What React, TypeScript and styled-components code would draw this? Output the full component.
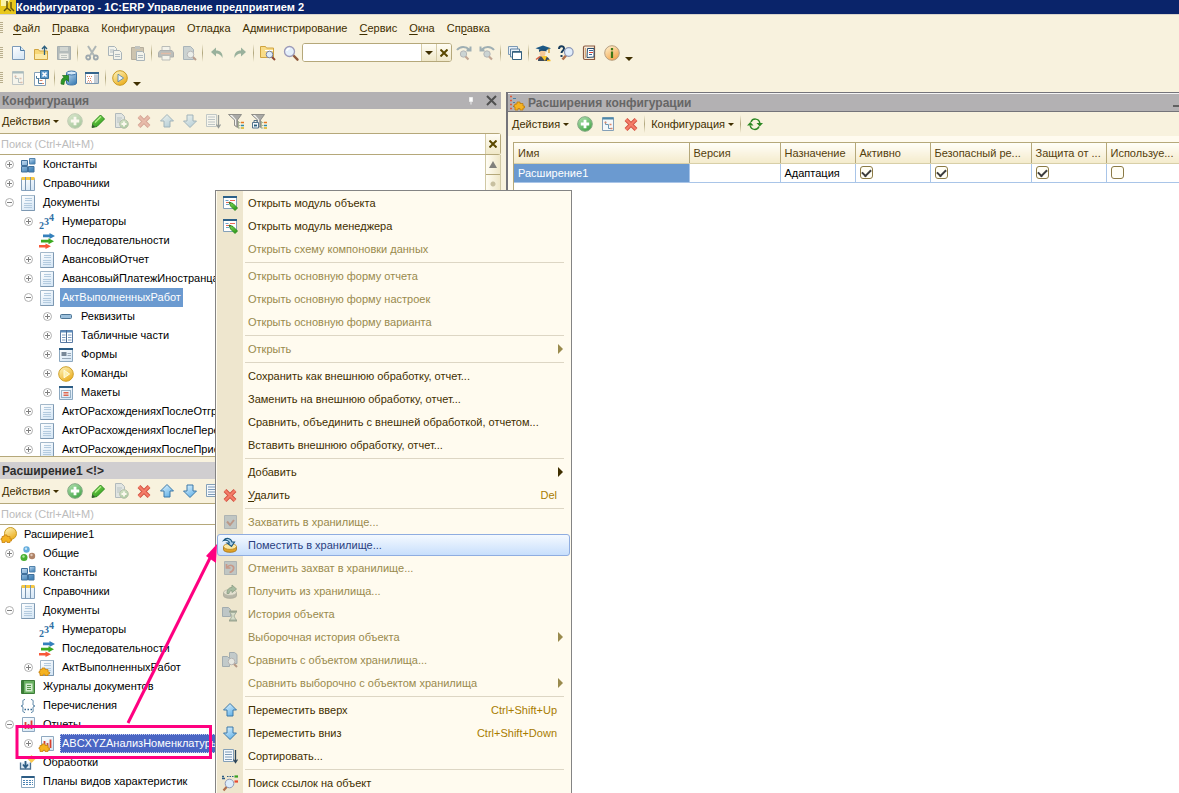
import React from "react";
import styled, { createGlobalStyle, css } from "styled-components";

const c = {
  cream: "#f8f2de",
  paper: "#fffbef",
  ink: "#3f2f00",
  mutedInk: "#998a4d",
  line: "#b5a87a",
  softLine: "#ddd6c4",
  select: "#6b9ad0",
  pink: "#ff0080",
};

const GlobalStyle = createGlobalStyle`
  * { box-sizing: border-box; }
  body { margin: 0; background: ${c.cream}; }
  body, button, input, table { font-family: "Liberation Sans", Arial, sans-serif; font-size: 11px; }
  button { border: 0; padding: 0; background: none; color: inherit; }
  u { text-underline-offset: 2px; }
`;

/* ---------- icons ---------- */

const doc = (
  <>
    <path d="M1.5.5h13v15h-13z" fill="url(#paper)" stroke="#a3b8ca" />
    <path d="M14.5.5v15h-13" stroke="#7d98b2" />
    <path d="M5 3.5h7M5 5.5h7M4 8.5h8M4 10.5h8M4 12.5h8" stroke="#b4cbdf" />
  </>
);
const arrowUp = <path d="M8 1.5l6.5 6.5H11v6H5V8H1.5z" fill="url(#sky)" stroke="#3c78a8" strokeLinejoin="round" />;
const arrowDown = <path d="M8 14.5L14.5 8H11V2H5v6H1.5z" fill="url(#sky)" stroke="#3c78a8" strokeLinejoin="round" />;
const pencil = (
  <>
    <path d="M2 14.5l1-5 7.5-7.5 4 4L7 13.5z" fill="url(#green)" stroke="#2c8a1c" />
    <path d="M5 9.5l6-6" stroke="#b4f08c" strokeWidth="1.2" />
    <path d="M2 14.5l.6-3 2.4 2.4z" fill="#3c4c3c" />
  </>
);
const lens = (
  <>
    <path d="M10.5 10.5l4 4.2" stroke="#8f5a3c" strokeWidth="2.4" strokeLinecap="round" />
    <circle cx="6.5" cy="6.5" r="5" fill="#e4effa" stroke="#9c9ab8" strokeWidth="1.3" />
    <path d="M3.8 6a3 3 0 0 1 3-2.5" stroke="#fff" strokeWidth="1.5" fill="none" />
  </>
);
const smallLens = (
  <>
    <path d="M11.5 11.5l3.5 3.5" stroke="#8f4a34" strokeWidth="2" />
    <circle cx="9.5" cy="9.5" r="3.3" fill="#dcecfa" stroke="#7d82a0" />
  </>
);
const puzzle = (
  <path d="M1 9.5h2V8h3v1.5h3V12h1.5v2H9v1.5H6v-1.2H4v1.2H1v-2.5H0v-1.5h1z" fill="#f5b321" stroke="#c98410" strokeWidth=".8" />
);
const funnel = (
  <>
    <path d="M.5 1.5h13L9.5 7v7.5l-3-2V7z" fill="#a9a9a6" />
    <path d="M1.5 2l5.500 5v5l1 1V6.500L4 2z" fill="#f2f2f0" />
    <path d="M.5 1.5h13L9.5 7v7.5l-3-2V7z" stroke="#80807c" strokeWidth=".8" />
  </>
);
const funnelRows = (
  <>
    <path d="M10.5 8v7.5M10.5 9.5h2M10.5 12.5h2M10.5 15h2" stroke="#9aa888" strokeWidth=".8" />
    <path d="M13 9.5h3" stroke="#e87820" strokeWidth="1.5" />
    <path d="M13 12.5h3" stroke="#2c8ca8" strokeWidth="1.5" />
    <path d="M13 15h3" stroke="#d8b020" strokeWidth="1.5" />
  </>
);
const report = (
  <>
    <path d="M2.5.5h12v14h-12z" fill="url(#paper)" stroke="#8ea8c0" />
    <path d="M5.5 5v7M11.5 3.5V12" stroke="#d8402e" strokeWidth="1.8" />
    <path d="M8.5 7v5" stroke="#c05848" strokeWidth="1.8" />
  </>
);
const sequence = (
  <>
    <path d="M4 1.500h6.500V0L16 3l-5.500 3V4.300H4z" fill="#3480bc" />
    <path d="M2 6.800h7.500V5.300L15 8.300l-5.500 3V9.600H2z" fill="#3caa20" />
    <path d="M0 12h6.500v-1.500L12 13.300 6.500 16v-1.400H0z" fill="#f85838" />
  </>
);
const formFrame = (
  <>
    <path d="M1.5 1.5h13v13h-13z" fill="url(#paper)" stroke="#8ca8c0" />
    <path d="M1 2h14" stroke="#2c5c84" strokeWidth="2" />
  </>
);
const barrel = (
  <>
    <path d="M1.5 9.5v3.2c0 1.4 2.9 2.6 6.5 2.6s6.500-1.200 6.500-2.600V9.500z" fill="#e0a428" stroke="#a06c10" strokeWidth=".8" />
    <ellipse cx="8" cy="9.5" rx="6.5" ry="2.9" fill="#fbe8a4" stroke="#b88420" strokeWidth=".8" />
  </>
);
const playDisc = (
  <>
    <circle cx="8" cy="8" r="7.3" fill="url(#gold)" stroke="#c99a20" />
    <path d="M6 4.2L11.6 8 6 11.8z" fill="#eaf4fb" stroke="#5c88a8" strokeWidth=".9" />
  </>
);
const commandDisc = (
  <>
    <circle cx="8" cy="8" r="7.3" fill="url(#gold)" stroke="#cfa028" />
    <path d="M6 4.2L11.6 8 6 11.8z" fill="#fdf0a8" stroke="#fffbe0" />
  </>
);

const glyphs: Record<string, React.ReactNode> = {
  app: (
    <>
      <path d="M0 0h16v16H0z" fill="#e8c81c" />
      <path d="M1 1h9l-4 6H1z" fill="#fbf4a8" />
      <path d="M7 2v7l-3 3M7 9l4 3M11 3v6l3 3" stroke="#6a5808" strokeWidth="1.5" fill="none" />
    </>
  ),
  new: (
    <>
      <path d="M2.5 1.5h8l4 4v9h-12z" fill="url(#paper)" stroke="#7c9ab8" />
      <path d="M10.5 1.5v4h4" fill="#d8e8f4" stroke="#4c7ca4" />
    </>
  ),
  open: (
    <>
      <path d="M1.5 4.5h4l1 1.5h8v8.5h-13z" fill="#f8d878" stroke="#d0a440" />
      <path d="M2 9h12v5H2z" fill="#fceaa8" />
      <path d="M11.5 10V1.5M9 4l2.500-2.700L14 4" stroke="#2c6080" strokeWidth="1.3" fill="none" />
    </>
  ),
  save: (
    <>
      <path d="M1.5 1.5h13v13h-13z" fill="#6c88a4" stroke="#507090" />
      <path d="M4 2h8v4H4z" fill="#a8bccc" />
      <path d="M3.5 8.5h9V14h-9z" fill="#e4ecf0" />
      <path d="M5 10.5h6M5 12.5h6" stroke="#8098a8" />
    </>
  ),
  cut: (
    <>
      <path d="M4 1l6 9.5M12 1L6 10.5" stroke="#5e7c98" strokeWidth="2" />
      <circle cx="4.2" cy="12.5" r="2" fill="none" stroke="#38608c" strokeWidth="1.8" />
      <circle cx="11.8" cy="12.5" r="2" fill="none" stroke="#38608c" strokeWidth="1.8" />
    </>
  ),
  copy: (
    <>
      <path d="M1.5 1.5h6l2 2v7h-8z" fill="#eef4fa" stroke="#5478a4" />
      <path d="M3 5h4M3 7h3" stroke="#6488b4" />
      <path d="M6.5 5.5h6l2 2v7h-8z" fill="#eef4fa" stroke="#5478a4" />
      <path d="M8 9.5h5M8 11.5h5" stroke="#6488b4" />
    </>
  ),
  paste: (
    <>
      <path d="M1.5 2.5h12v12h-12z" fill="#a89878" stroke="#786c58" />
      <path d="M5 1h5v3H5z" fill="#8898a8" />
      <path d="M6.5 6.5h6l2 2v7h-8z" fill="#eef4fa" stroke="#5478a4" />
      <path d="M8 10.5h5M8 12.5h5" stroke="#6488b4" />
    </>
  ),
  print: (
    <>
      <path d="M4 1.5h8v5H4z" fill="#f0f4f8" stroke="#788898" />
      <path d="M2 5.5h12l1.5 2V12H.5V7.5z" fill="#7c8ca0" stroke="#607088" />
      <path d="M4 10.5h8V15H4z" fill="#f0f4f8" stroke="#788898" />
      <path d="M3 8.5h10" stroke="#e08060" strokeWidth="1.5" />
    </>
  ),
  preview: (
    <>
      <path d="M2.5 1.5h7l3 3v10h-10z" fill="#98b4d0" stroke="#5478a4" />
      {smallLens}
    </>
  ),
  undo: <path d="M2 7l5-4.500v3c4.500 0 7 2.500 6.500 7.500C12 10 10 8.500 7 8.500v3z" fill="#2c7858" />,
  redo: <path d="M14 7L9 2.500v3c-4.500 0-7 2.500-6.500 7.500C4 10 6 8.500 9 8.500v3z" fill="#2c7858" />,
  findFolder: (
    <>
      <path d="M.5 1.5h5l1 1.5h7v9.5H.5z" fill="#f8dc88" stroke="#d0a440" />
      <path d="M5 5.5h8" stroke="#fff" />
      {smallLens}
    </>
  ),
  zoom: lens,
  findNext: (
    <>
      <path d="M1 5c3-4 9-4 12-.5M14.5 1.5v4h-4" stroke="#3c7098" strokeWidth="2" fill="none" />
      <circle cx="7.5" cy="9" r="3.2" fill="#98b8d4" stroke="#6c7c98" />
      <path d="M9.5 11.5l3 3" stroke="#a05a40" strokeWidth="2.2" />
    </>
  ),
  findPrev: (
    <>
      <path d="M15 5c-3-4-9-4-12-.5M1.5 1.5v4h4" stroke="#3c7098" strokeWidth="2" fill="none" />
      <circle cx="8" cy="9" r="3.2" fill="#98b8d4" stroke="#6c7c98" />
      <path d="M10 11.5l3 3" stroke="#a05a40" strokeWidth="2.2" />
    </>
  ),
  windows: (
    <>
      <path d="M1.5 1.5h9v8h-9z" fill="#e8f0f8" stroke="#7c9ab4" />
      <path d="M3.5 4h9v8h-9z" fill="#e8f0f8" stroke="#5c80a0" />
      <path d="M5.5 6.5h9v8h-9z" fill="#fff" stroke="#34607f" />
      <path d="M5.5 7h9" stroke="#34607f" strokeWidth="1.5" />
    </>
  ),
  scholar: (
    <>
      <path d="M3 16c0-4 2-5 5-5s6 1 7 5z" fill="#3c4a5c" />
      <path d="M6 11l4 5 2-5z" fill="#f8c428" />
      <path d="M12 15.5h3.5" stroke="#f4b820" strokeWidth="1.5" />
      <ellipse cx="7.5" cy="8" rx="3" ry="3.5" fill="#f4c898" />
      <path d="M.5 3.200L8 .5l8 2.700L9 6z" fill="#1c5884" />
      <path d="M4 4.5V7c2-1.500 5-1.500 7.500-.5v-2z" fill="#1a4a70" />
      <path d="M14 3.5V8" stroke="#d09018" strokeWidth="1.2" />
      <path d="M1 14.5l4-3" stroke="#d86040" strokeWidth="1.5" />
    </>
  ),
  helpSearch: (
    <>
      <path d="M1 4c0-3.500 5-3.500 5-.5C6 6 3.500 5.500 3.500 8M3.500 10v2" stroke="#183c5c" strokeWidth="2" fill="none" />
      <path d="M8 10.5l-3.500 4" stroke="#b0704c" strokeWidth="2.6" />
      <circle cx="10.8" cy="7" r="4.3" fill="#e0ecfa" stroke="#8c98b8" strokeWidth="1.2" />
    </>
  ),
  book: (
    <>
      <path d="M2.5 2.5c0-1 .5-1.500 1.500-1.500h9.500v13.500H4c-1 0-1.500-.5-1.500-1.500z" fill="#f6ead8" stroke="#8a5a40" strokeWidth="1.2" />
      <path d="M6.5 3.5H13V12l-7 .5z" fill="#fff" stroke="#2c5070" />
      <path d="M8 5.5h4M8 9.5h3" stroke="#34689a" />
      <path d="M8 7.5h4" stroke="#d84838" />
      <path d="M4.5 3v10" stroke="#d8a878" />
    </>
  ),
  info: (
    <>
      <circle cx="8" cy="8" r="7.3" fill="url(#amber)" stroke="#b8a080" />
      <path d="M8 3v2.2M8 6.500V13" stroke="#3c7818" strokeWidth="2.2" />
    </>
  ),
  treeForm: (
    <>
      <path d="M2.5 1.5h11v13h-11z" fill="#f4f8fa" stroke="#84a0b8" />
      <path d="M2.5 2.5h11" stroke="#4c88a8" strokeWidth="2" />
      <path d="M5.5 5.5v3h3M8.500 8.500v4h3" stroke="#6c98b4" fill="none" />
      <path d="M4.5 6.5h2M9.5 8.5h2M10.5 12.5h2" stroke="#e08868" strokeWidth="1.5" />
    </>
  ),
  closeTree: (
    <>
      <path d="M1.5 2.5h11v13h-11z" fill="#fff" stroke="#84a0b8" />
      <path d="M3.5 6v2.5h3M5.500 8.500v5H9" stroke="#4c7c9c" fill="none" />
      <path d="M9 13.5h2M6.5 10.5h3" stroke="#e08868" />
      <path d="M7.5.5h8v8h-8z" fill="#5c98c8" stroke="#34709c" />
      <path d="M9.5 2.5l4 4M13.5 2.5l-4 4" stroke="#fff" strokeWidth="1.7" />
    </>
  ),
  database: (
    <>
      <path d="M5.5 3v10c0 1.300 2.200 2 5 2s5-.7 5-2V3z" fill="url(#blue)" stroke="#3c74a8" />
      <ellipse cx="10.5" cy="3" rx="5" ry="2" fill="#d4e8f8" stroke="#3c74a8" />
      <path d="M0 14c0-4 1-6 3-6.500L1.500 5.500h6v6L5.500 9.500C4 10.500 3 12 3 14.500z" fill="#2c9828" stroke="#1c6c18" strokeWidth=".7" />
    </>
  ),
  configWindow: (
    <>
      <path d="M1.5 2.5h13v11h-13z" fill="#fff" stroke="#7c98b0" />
      <path d="M1 3h14" stroke="#34648c" strokeWidth="2" />
      <path d="M10 4.5h4V13h-4z" fill="#c4ccd4" />
      <path d="M3 6.5h5M4 8.5h4M4 10.5h4M3 12h5" stroke="#e08868" strokeDasharray="1 1" />
    </>
  ),
  play: playDisc,
  add: (
    <>
      <circle cx="8" cy="8" r="7.3" fill="url(#mint)" stroke="#84a884" />
      <path d="M8 3.8v8.4M3.8 8h8.4" stroke="#fff" strokeWidth="2.8" />
    </>
  ),
  pencil,
  addCopy: (
    <>
      <path d="M2.5.5h6l3 3v11h-9z" fill="#c4d8ea" stroke="#6484a8" />
      <path d="M4 5h5M4 7h4M4 9h3" stroke="#7498b8" />
      <circle cx="11" cy="11" r="4.3" fill="url(#mint)" stroke="#6c9470" />
      <path d="M11 8.5v5M8.5 11h5" stroke="#fff" strokeWidth="1.8" />
    </>
  ),
  remove: (
    <>
      <path d="M3 3.5l10 10M13 3.5l-10 10" stroke="#d05040" strokeWidth="4" />
      <path d="M3 3.5l10 10M13 3.5l-10 10" stroke="#f47c68" strokeWidth="2.4" />
    </>
  ),
  up: arrowUp,
  down: arrowDown,
  sort: (
    <>
      <path d="M1.5 1.5h10v12h-10z" fill="#f4f8fc" stroke="#84a0b8" />
      <path d="M3 4h7M3 6.5h7M3 9h7M3 11.5h7" stroke="#7c9ab8" />
      <path d="M13.5 2v12M11.5 11.5l2 3 2-3" stroke="#2c4458" strokeWidth="1.3" fill="none" />
    </>
  ),
  filter: (
    <>
      {funnel}
      {funnelRows}
    </>
  ),
  filterOff: (
    <>
      {funnel}
      {funnelRows}
      <path d="M1.5 9.5h6V15h-6z" fill="#f4f8fc" stroke="#54748c" />
      <path d="M3 12.5h3" stroke="#28607c" strokeWidth="1.8" />
      <path d="M3 9V7.5h3V9" stroke="#54748c" />
    </>
  ),
  refresh: (
    <>
      <path d="M4 6c1.500-4 8-4 8.800 1M12 10.500c-1.500 4-8 4-8.800-1" stroke="#2c8824" strokeWidth="1.5" fill="none" />
      <path d="M9.5 7H16l-3.200 3.500zM0 9.500h6.500L3.300 6z" fill="#2c8824" />
    </>
  ),
  extension: (
    <>
      <path d="M1 1.5h2M1 5.5h2M1 9.5h2M1 13.5h2" stroke="#e05838" strokeWidth="1.5" />
      <path d="M4 3.5h3M4 7.5h2M4 11.5h2" stroke="#4880a8" />
      <path d="M6 9h2V7h3v1.5h3V11h1.5v2H14v2h-3v-1.500H9V15H6v-3H5v-2h1z" fill="#f5b321" stroke="#c07c08" strokeWidth=".8" />
    </>
  ),
  constants: (
    <>
      <path d="M9.5 1.5H15V7H9.5z" fill="url(#blue)" stroke="#5484ac" />
      <path d="M1.5 3.5h6v5h-6zM1.5 9.5h6V15h-6zM8.5 9.5H14V15H8.5z" fill="url(#blue)" stroke="#40709c" />
    </>
  ),
  catalogs: (
    <>
      <path d="M1.5 2.5h13v12h-13z" fill="url(#paper)" stroke="#84a0bc" />
      <path d="M1.5 2.5h13" stroke="#f8c840" strokeWidth="3" />
      <path d="M5.5 1v13.5M10.5 1v13.5" stroke="#7894b0" />
    </>
  ),
  documents: doc,
  sequences: sequence,
  attribute: <rect x="2.5" y="5.5" width="11" height="4" rx="1" fill="#9cc0dc" stroke="#4c7494" />,
  tabular: (
    <>
      <path d="M2.5 2.5h12v12h-12z" fill="#fff" stroke="#5c7ca4" />
      <path d="M2.5 3.5h12" stroke="#5c8cbc" strokeWidth="2" />
      <path d="M8.5 2v12.5" stroke="#4c6c94" />
      <path d="M4 7h3.5M10 7h3.5M4 9.5h3.5M10 9.5h3.5M4 12h3.5M10 12h3.5" stroke="#7c9cc0" />
    </>
  ),
  forms: (
    <>
      {formFrame}
      <path d="M3.5 5h5v4h-5z" fill="#788898" />
      <path d="M9.5 6.5H13M9.5 8.5H13M4 11.5h9" stroke="#98a8b8" />
    </>
  ),
  commands: commandDisc,
  layouts: (
    <>
      {formFrame}
      <path d="M3.5 5.5h9v7h-9z" fill="none" stroke="#4c7494" strokeDasharray="1 1" />
      <path d="M5.5 7.5h5M5.5 9h5M5.5 10.5h5" stroke="#e06850" />
    </>
  ),
  extRoot: (
    <>
      <circle cx="9.5" cy="6.5" r="6" fill="url(#gold)" stroke="#c99a20" />
      {puzzle}
    </>
  ),
  common: (
    <>
      <circle cx="6.5" cy="3.5" r="3.2" fill="#64acdc" />
      <circle cx="6" cy="2.7" r="1.2" fill="#c4e4f8" />
      <circle cx="4" cy="11.5" r="3.5" fill="#48b030" />
      <circle cx="3.5" cy="10.5" r="1.2" fill="#b0e8a0" />
      <circle cx="12" cy="10" r="3.2" fill="#b08468" />
      <circle cx="11.5" cy="9" r="1.2" fill="#e0c8b8" />
    </>
  ),
  extDocument: (
    <>
      {doc}
      {puzzle}
    </>
  ),
  journals: (
    <>
      <path d="M1.5 1.5h13v13h-13z" fill="#68b060" stroke="#3c7c38" />
      <path d="M3 1.5v13" stroke="#2c6c28" strokeWidth="1.5" />
      <path d="M5.5 4.5h7v8h-7z" fill="#d4ecd0" />
      <path d="M7 6.5h4M7 8.5h4M7 10.5h4" stroke="#58984c" />
    </>
  ),
  enums: (
    <>
      <path d="M5 1.5c-3 0-2 3-2 4.5S2 8 1 8c1 0 2 .5 2 2s-1 4.500 2 4.500M11 1.500c3 0 2 3 2 4.500s1 2 2 2c-1 0-2 .5-2 2s1 4.500-2 4.500" stroke="#4c7ca0" fill="none" />
      <path d="M4.5 11.5H6M7.5 11.5H9M10.5 11.5H12" stroke="#346890" strokeWidth="1.5" />
    </>
  ),
  reports: report,
  extReport: (
    <>
      {report}
      {puzzle}
    </>
  ),
  processing: (
    <>
      <path d="M.5 7.5V14h10V7.5" fill="#dce8f4" stroke="#4c7090" strokeWidth="1.3" />
      <path d="M5.5 6v6M3 9.5l2.500 3 2.500-3" stroke="#2c5c84" strokeWidth="1.8" fill="none" />
      <path d="M11.5 0l4 4-4 4-4-4z" fill="#f8c850" />
      <path d="M11.5 1.5L14 4H9z" fill="#fdeab8" />
    </>
  ),
  chartTypes: (
    <>
      <path d="M1.5 2.5h13v11h-13z" fill="#fff" stroke="#8ca8c0" />
      <path d="M1.5 3h13" stroke="#2c5c84" strokeWidth="2" />
      <path d="M3 6.5h10M3 8.5h10M3 10.5h10" stroke="#4c84b4" strokeDasharray="2 1" />
    </>
  ),
  moduleEdit: (
    <>
      <path d="M1.5 1.5h13v12h-13z" fill="#fff" stroke="#84a0b8" />
      <path d="M1 2h14" stroke="#2c6088" strokeWidth="2" />
      <path d="M3.5 5.5h3M4 9.5h3" stroke="#6ca0c4" />
      <path d="M8 5.5h5M4 7.5h3" stroke="#f06858" />
      <path d="M7 7l4 1.500 4.500 4.500-2.500 2.500-4.500-4.500z" fill="url(#green)" stroke="#2c8a1c" strokeWidth=".9" />
      <path d="M7 7l2 .7-1.300 1.300z" fill="#3c4c3c" />
    </>
  ),
  capture: (
    <>
      <path d="M2.5 1.5h12v13h-12z" fill="#8ca8c4" stroke="#6884a4" />
      <path d="M5 7.5l3 3.5 4-5" stroke="#a04838" strokeWidth="2" fill="none" />
    </>
  ),
  commit: (
    <>
      {barrel}
      <path d="M1.5 3.5C4 0 9 1 10 5h2.5l-3 4.500L5 6h2.500C7 3.500 4 2.500 1.500 3.500z" fill="#a8d0ec" stroke="#1c5880" strokeWidth="1.1" />
    </>
  ),
  revert: (
    <>
      <path d="M2.5 1.5h12v13h-12z" fill="#8ca8c4" stroke="#6884a4" />
      <path d="M4.5 4v4h4M5 7.500c3-4 7.500-2 6.500 1.500-.5 2-2 3-4 3.500" stroke="#c04838" strokeWidth="1.7" fill="none" />
    </>
  ),
  fetch: (
    <>
      <path d="M1.5 9.5v3.2c0 1.400 2.900 2.600 6.500 2.600s6.500-1.200 6.500-2.600V9.500z" fill="#808880" stroke="#606860" strokeWidth=".8" />
      <ellipse cx="8" cy="9.5" rx="6.5" ry="2.9" fill="#d8dcd0" stroke="#808878" strokeWidth=".8" />
      <path d="M5 10.5c0-4 2-6 5-6V2l4.500 4L10 9.500v-2c-2 0-2.500 1-3 3z" fill="#509868" stroke="#2c6844" />
    </>
  ),
  history: (
    <>
      <path d="M.5 1.5h6l2 2v7h-8z" fill="#88a8cc" stroke="#5074a0" />
      <path d="M7 5.5h8M7 14.5h8" stroke="#406850" strokeWidth="1.8" />
      <path d="M8 6.5h6L12 10l2 4H8l2-4z" fill="#b8d8c0" stroke="#588070" />
    </>
  ),
  compare: (
    <>
      <path d="M.5 4.5h5l2 2v8h-7z" fill="#90b0d4" stroke="#5074a0" />
      <path d="M7.5.5h5l2.500 2v9H7.500z" fill="#90b0d4" stroke="#5074a0" />
      {smallLens}
    </>
  ),
  findRefs: (
    <>
      <path d="M0 3.5h3M0 1.5h2" stroke="#2c5c84" strokeWidth="1.5" />
      <path d="M5 1.5h7" stroke="#2c5c84" strokeDasharray="1.5 1" />
      <path d="M12.5 1.5H16" stroke="#38a020" strokeWidth="2.2" />
      <path d="M12.5 6.5H16" stroke="#e84830" strokeWidth="2.2" />
      <path d="M5 11.5l-3.500 4" stroke="#b0704c" strokeWidth="2.2" />
      <circle cx="7.5" cy="8.5" r="4.3" fill="#dcecfa" stroke="#8c98b8" />
    </>
  ),
};

const Svg = styled.svg<{ $dim?: boolean }>`
  display: block;
  flex: none;
  ${(p) => p.$dim && css`opacity: 0.5; filter: saturate(0.7);`}
`;

const NumeratorText = styled.text`
  font: bold 10px "Liberation Serif", "Times New Roman", serif;
  fill: #2f6ea4;
`;

function Icon({ name, dim }: { name: string; dim?: boolean }) {
  return (
    <Svg width="16" height="16" viewBox="0 0 16 16" $dim={dim} fill="none" aria-hidden="true" overflow="visible">
      {name === "numerators" ? (
        <>
          <NumeratorText x="0" y="15">2</NumeratorText>
          <NumeratorText x="5" y="11">3</NumeratorText>
          <NumeratorText x="10" y="7">4</NumeratorText>
        </>
      ) : (
        glyphs[name]
      )}
    </Svg>
  );
}

const DefsSvg = styled.svg`
  position: absolute;
`;

function grad(id: string, from: string, to: string) {
  return (
    <linearGradient id={id} x1="0" y1="0" x2="0.6" y2="1">
      <stop offset="0" stopColor={from} />
      <stop offset="1" stopColor={to} />
    </linearGradient>
  );
}

const Gradients = () => (
  <DefsSvg width="0" height="0" aria-hidden="true">
    <defs>
      {grad("paper", "#ffffff", "#d8e8f6")}
      {grad("sky", "#e4f6ff", "#68b4e8")}
      {grad("green", "#8ce05c", "#2c9c1c")}
      {grad("blue", "#c4dcf2", "#4484b8")}
      {grad("gold", "#fff8c4", "#ecb024")}
      {grad("amber", "#fff4d4", "#f4a850")}
      {grad("mint", "#b4e4b4", "#48a84c")}
    </defs>
  </DefsSvg>
);

/* ---------- frame ---------- */

const Shell = styled.div`
  position: relative;
  display: flex;
  flex-direction: column;
  height: 100vh;
  overflow: hidden;
  background: ${c.cream};
  color: ${c.ink};
`;

const TitleBar = styled.header`
  display: flex;
  align-items: center;
  height: 15px;
  flex: none;
  overflow: hidden;
  background: #0a246a;
  border-bottom: 1px solid #d8d4cc;
  color: #fff;
`;

const AppTitle = styled.h1`
  margin: 0;
  font-size: 11px;
  line-height: 14px;
  white-space: nowrap;
`;

const Grip = styled.span`
  width: 3px;
  height: 12px;
  margin-right: 3px;
  background: repeating-linear-gradient(#b8ae8c 0 1px, ${c.cream} 1px 2px);
`;

const MenuBar = styled.nav`
  display: flex;
  align-items: center;
  height: 25px;
  flex: none;
`;

const MenuBarItem = styled.button`
  padding: 0 6px;
  white-space: nowrap;
  ${Grip} + & { margin-left: 1px; }
`;

const Toolbars = styled.div`
  flex: none;
  padding-bottom: 2px;
`;

const ToolRow = styled.div`
  display: flex;
  align-items: center;
  height: 25px;
`;

const ToolButton = styled.button`
  display: grid;
  place-items: center;
  width: 23px;
  height: 22px;
  flex: none;
`;

const Divider = styled.span<{ $wide?: boolean }>`
  width: 1px;
  height: 18px;
  margin: 0 ${(p) => (p.$wide ? 6 : 2)}px 0 2px;
  flex: none;
  background: linear-gradient(${c.cream}, #b0a67c, ${c.cream});
`;

const Caret = styled.span<{ $low?: boolean }>`
  border: 4px solid transparent;
  border-bottom: 0;
  border-top-color: currentColor;
  ${(p) => p.$low && css`margin: 12px 0 0 2px;`}
`;

const SmallCaret = styled(Caret)`
  border-width: 3px;
  border-bottom: 0;
`;

const Combo = styled.div`
  display: flex;
  width: 150px;
  height: 19px;
  border: 1px solid ${c.line};
  border-radius: 3px;
  overflow: hidden;
  background: #fff;
`;

const ComboInput = styled.input`
  flex: 1;
  min-width: 0;
  border: 0;
  outline: 0;
`;

const ComboButton = styled.button`
  display: grid;
  place-items: center;
  width: 15px;
  flex: none;
  border-left: 1px solid #d5cca8;
  background: linear-gradient(#fffdf4, #f0e8c8);
`;

const Cross = () => (
  <Svg width="8" height="8" viewBox="0 0 8 8" aria-hidden="true">
    <path d="M.5.5l7 7M7.5.5l-7 7" stroke="#5a4800" strokeWidth="2" />
  </Svg>
);

const Workspace = styled.main`
  display: flex;
  gap: 5px;
  flex: 1;
  min-height: 0;
`;

const Dock = styled.div`
  display: grid;
  grid-template-rows: 370fr 331fr;
  width: 501px;
  flex: none;
`;

const Pane = styled.section`
  display: flex;
  flex-direction: column;
  min-height: 0;
  overflow: hidden;
`;

const PaneHeader = styled.div<{ $active?: boolean }>`
  display: flex;
  align-items: center;
  gap: 12px;
  height: 17px;
  padding: 0 4px 0 2px;
  flex: none;
  background: ${(p) => (p.$active ? "#d0ced0" : "#b3b1b3")};
  color: ${(p) => (p.$active ? "#2c2c2c" : "#666")};
`;

const PaneTitle = styled.h2`
  flex: 1;
  margin: 0;
  font-size: 12px;
  line-height: 16px;
  white-space: nowrap;
`;

const PaneTools = styled.div`
  display: flex;
  align-items: center;
  height: 24px;
  padding-left: 2px;
  flex: none;
`;

const TextButton = styled.button`
  display: flex;
  align-items: center;
  gap: 3px;
  margin-right: 4px;
`;

const SearchBox = styled.div`
  display: flex;
  height: 22px;
  flex: none;
  border: 1px solid ${c.line};
  border-left: 0;
  border-radius: 0 3px 3px 0;
  background: #fff;
`;

const SearchInput = styled.input`
  flex: 1;
  min-width: 0;
  padding: 0 0 0 1px;
  border: 0;
  outline: 0;
  &::placeholder { color: #bcbcbc; opacity: 1; }
`;

const TreeArea = styled.div`
  display: flex;
  flex: 1;
  min-height: 0;
  background: #fff;
`;

const Tree = styled.ul`
  flex: 1;
  min-width: 0;
  margin: 0;
  padding: 0;
  overflow: hidden;
  list-style: none;
  color: #000;
`;

const PaneFoot = styled.div`
  height: 6px;
  flex: none;
  border-top: 1px solid ${c.line};
`;

const TreeRow = styled.li<{ $level: number }>`
  display: flex;
  align-items: center;
  height: 19px;
  padding-left: ${(p) => (p.$level < 0 ? 1 : p.$level * 19 + 1)}px;
`;

const ExpandSlot = styled.span`
  display: grid;
  place-items: center;
  width: 19px;
  height: 19px;
  padding-right: 2px;
  flex: none;
`;

const RowLabel = styled.span<{ $mark?: "soft" | "strong" }>`
  margin-left: 5px;
  padding: 0 2px;
  line-height: 19px;
  white-space: nowrap;
  ${(p) => p.$mark === "soft" && css`background: ${c.select}; color: #fff;`}
  ${(p) => p.$mark === "strong" && css`background: #4a66c4; color: #fff; outline: 1px dotted #c8d0f0; outline-offset: -1px;`}
`;

const ScrollBar = styled.div`
  display: flex;
  flex-direction: column;
  width: 16px;
  flex: none;
  border: 1px solid #d0c8a4;
  border-top: 0;
  background: #f4eed8;
`;

const ScrollButton = styled.button`
  display: grid;
  place-items: center;
  height: 20px;
  border-bottom: 1px solid ${c.line};
  background: linear-gradient(90deg, #fffdf4, #efe7c8);
`;

const UpTriangle = styled.span`
  border: 4px solid transparent;
  border-top: 0;
  border-bottom: 7px solid #80807c;
`;

const ScrollThumb = styled.div`
  height: 60px;
  border-bottom: 1px solid ${c.line};
  background: radial-gradient(circle at 7px 9px, #c8c0a0 2px, transparent 3px), linear-gradient(90deg, #fffdf4, #efe7c8);
`;

/* ---------- extensions window ---------- */

const Child = styled.section`
  display: flex;
  flex-direction: column;
  flex: 1;
  min-width: 0;
  border: solid #74747a;
  border-width: 1px 0 0 2px;
  background: ${c.paper};
`;

const ChildTitle = styled(PaneHeader)`
  height: 19px;
  gap: 3px;
  padding: 0 0 0 1px;
  border-top: 1px solid #f4f4f4;
  border-bottom: 1px solid #74747a;
`;

const Minimize = styled.button`
  align-self: flex-end;
  width: 6px;
  height: 2px;
  margin-bottom: 4px;
  background: #606060;
`;

const ChildTools = styled.div`
  display: flex;
  align-items: center;
  height: 24px;
  padding-left: 4px;
  flex: none;
  background: ${c.cream};
`;

const TableArea = styled.div`
  flex: 1;
  margin: 6px 0 0 5px;
  background: #fff;
  border: solid ${c.line};
  border-width: 1px 0 0 1px;
  overflow: hidden;
`;

const Table = styled.table`
  width: 100%;
  table-layout: fixed;
  border-collapse: collapse;
`;

const Col = styled.col<{ $w?: number }>`
  width: ${(p) => (p.$w ? `${p.$w}px` : "auto")};
`;

const Th = styled.th`
  height: 20px;
  padding: 0 0 0 4px;
  border-right: 1px solid ${c.line};
  border-bottom: 1px solid #d8cfa8;
  background: linear-gradient(#fffef8, #f4ebcc);
  color: #54400c;
  font-weight: normal;
  text-align: left;
  white-space: nowrap;
  overflow: hidden;
  &:last-child { border-right: 0; }
`;

const Td = styled.td<{ $on?: boolean }>`
  height: 19px;
  padding: 0 0 0 4px;
  border-right: 1px solid #a9c5e8;
  border-bottom: 1px solid #a9c5e8;
  color: #000;
  ${(p) => p.$on && css`background: ${c.select}; color: #fff;`}
  &:last-child { border-right: 0; }
`;

const Check = styled.input`
  display: grid;
  place-items: center;
  appearance: none;
  width: 13px;
  height: 13px;
  margin: 0;
  border: 1px solid #8b7a45;
  border-radius: 3px;
  background: #fffef6;
  &:checked::after {
    content: "";
    width: 7px;
    height: 4px;
    margin-bottom: 2px;
    border: solid #3c3c3c;
    border-width: 0 0 2px 2px;
    transform: rotate(-45deg);
  }
`;

/* ---------- context menu ---------- */

const ContextMenu = styled.div`
  position: absolute;
  left: 215px;
  top: 190px;
  bottom: -2px;
  width: 357px;
  padding: 1px;
  border: 1px solid #848484;
  background: linear-gradient(90deg, ${c.paper} 1px, #eee6ce 1px 27px, ${c.paper} 27px);
  overflow: hidden;
`;

const MenuGroup = styled.div`
  display: flex;
  flex-direction: column;
  & + &::before {
    content: "";
    height: 1px;
    margin: 1px 6px 2px 28px;
    background: ${c.softLine};
  }
`;

const MenuItem = styled.button<{ $active?: boolean }>`
  display: flex;
  align-items: center;
  height: 22px;
  margin-bottom: 1px;
  padding: 0 6px 1px 4px;
  border: 1px solid transparent;
  border-radius: 3px;
  text-align: left;
  white-space: nowrap;
  &:disabled { color: ${c.mutedInk}; }
  ${(p) => p.$active && css`
    border-color: #8fade0;
    background: linear-gradient(#f4f9ff, #c8dffc);
    color: #2a3f80;
  `}
`;

const MenuIconSlot = styled.span`
  width: 16px;
  margin-right: 10px;
  flex: none;
`;

const MenuText = styled.span`
  flex: 1;
`;

const Shortcut = styled.span`
  margin-right: 6px;
  color: #a87c00;
`;

const SubArrow = styled.span`
  border: 5px solid transparent;
  border-right: 0;
  border-left-color: currentColor;
`;

const Markup = styled.svg`
  position: absolute;
  left: 0;
  top: 0;
  pointer-events: none;
`;

/* ---------- data ---------- */

type Node = { t: string; icon: string; level: number; exp?: "+" | "-"; mark?: "soft" | "strong" };

const configTree: Node[] = [
  { t: "Константы", icon: "constants", level: 0, exp: "+" },
  { t: "Справочники", icon: "catalogs", level: 0, exp: "+" },
  { t: "Документы", icon: "documents", level: 0, exp: "-" },
  { t: "Нумераторы", icon: "numerators", level: 1, exp: "+" },
  { t: "Последовательности", icon: "sequences", level: 1 },
  { t: "АвансовыйОтчет", icon: "documents", level: 1, exp: "+" },
  { t: "АвансовыйПлатежИностранца", icon: "documents", level: 1, exp: "+" },
  { t: "АктВыполненныхРабот", icon: "documents", level: 1, exp: "-", mark: "soft" },
  { t: "Реквизиты", icon: "attribute", level: 2, exp: "+" },
  { t: "Табличные части", icon: "tabular", level: 2, exp: "+" },
  { t: "Формы", icon: "forms", level: 2, exp: "+" },
  { t: "Команды", icon: "commands", level: 2, exp: "+" },
  { t: "Макеты", icon: "layouts", level: 2, exp: "+" },
  { t: "АктОРасхожденияхПослеОтгрузки", icon: "documents", level: 1, exp: "+" },
  { t: "АктОРасхожденияхПослеПеремещения", icon: "documents", level: 1, exp: "+" },
  { t: "АктОРасхожденияхПослеПриемки", icon: "documents", level: 1, exp: "+" },
];

const extensionTree: Node[] = [
  { t: "Расширение1", icon: "extRoot", level: -1 },
  { t: "Общие", icon: "common", level: 0, exp: "+" },
  { t: "Константы", icon: "constants", level: 0 },
  { t: "Справочники", icon: "catalogs", level: 0 },
  { t: "Документы", icon: "documents", level: 0, exp: "-" },
  { t: "Нумераторы", icon: "numerators", level: 1 },
  { t: "Последовательности", icon: "sequences", level: 1 },
  { t: "АктВыполненныхРабот", icon: "extDocument", level: 1, exp: "+" },
  { t: "Журналы документов", icon: "journals", level: 0 },
  { t: "Перечисления", icon: "enums", level: 0 },
  { t: "Отчеты", icon: "reports", level: 0, exp: "-" },
  { t: "ABCXYZАнализНоменклатуры", icon: "extReport", level: 1, exp: "+", mark: "strong" },
  { t: "Обработки", icon: "processing", level: 0 },
  { t: "Планы видов характеристик", icon: "chartTypes", level: 0 },
];

type Entry = { t: string; u?: boolean; icon?: string; off?: boolean; key?: string; sub?: boolean; active?: boolean };

const menuGroups: Entry[][] = [
  [
    { t: "Открыть модуль объекта", icon: "moduleEdit" },
    { t: "Открыть модуль менеджера", icon: "moduleEdit" },
    { t: "Открыть схему компоновки данных", off: true },
  ],
  [
    { t: "Открыть основную форму отчета", off: true },
    { t: "Открыть основную форму настроек", off: true },
    { t: "Открыть основную форму варианта", off: true },
  ],
  [{ t: "Открыть", off: true, sub: true }],
  [
    { t: "Сохранить как внешнюю обработку, отчет..." },
    { t: "Заменить на внешнюю обработку, отчет..." },
    { t: "Сравнить, объединить с внешней обработкой, отчетом..." },
    { t: "Вставить внешнюю обработку, отчет..." },
  ],
  [
    { t: "Добавить", sub: true },
    { t: "Удалить", u: true, icon: "remove", key: "Del" },
  ],
  [
    { t: "Захватить в хранилище...", icon: "capture", off: true },
    { t: "Поместить в хранилище...", icon: "commit", active: true },
    { t: "Отменить захват в хранилище...", icon: "revert", off: true },
    { t: "Получить из хранилища...", icon: "fetch", off: true },
    { t: "История объекта", icon: "history", off: true },
    { t: "Выборочная история объекта", off: true, sub: true },
    { t: "Сравнить с объектом хранилища...", icon: "compare", off: true },
    { t: "Сравнить выборочно с объектом хранилища", off: true, sub: true },
  ],
  [
    { t: "Переместить вверх", icon: "up", key: "Ctrl+Shift+Up" },
    { t: "Переместить вниз", icon: "down", key: "Ctrl+Shift+Down" },
    { t: "Сортировать...", icon: "sort" },
  ],
  [{ t: "Поиск ссылок на объект", icon: "findRefs" }],
];

function Tool({ name, label, dim }: { name: string; label: string; dim?: boolean }) {
  return (
    <ToolButton aria-label={label} disabled={dim}>
      <Icon name={name} dim={dim} />
    </ToolButton>
  );
}

function Expander({ kind }: { kind: "+" | "-" }) {
  return (
    <Svg width="9" height="9" viewBox="0 0 9 9" fill="none" aria-hidden="true">
      <circle cx="4.5" cy="4.5" r="4" stroke="#b0b0b0" />
      <path d={kind === "+" ? "M2 4.5h5M4.5 2v5" : "M2 4.5h5"} stroke="#808080" />
    </Svg>
  );
}

function TreeView({ nodes }: { nodes: Node[] }) {
  return (
    <Tree>
      {nodes.map((n) => (
        <TreeRow key={n.t} $level={n.level}>
          {n.level >= 0 && <ExpandSlot>{n.exp && <Expander kind={n.exp} />}</ExpandSlot>}
          <Icon name={n.icon} />
          <RowLabel $mark={n.mark}>{n.t}</RowLabel>
        </TreeRow>
      ))}
    </Tree>
  );
}

function PaneToolbar({ dim }: { dim?: boolean }) {
  return (
    <PaneTools>
      <TextButton>Действия <SmallCaret /></TextButton>
      <Tool name="add" label="Добавить" dim={dim} />
      <Tool name="pencil" label="Изменить" />
      <Tool name="addCopy" label="Скопировать" dim />
      <Tool name="remove" label="Удалить" dim={dim} />
      <Tool name="up" label="Вверх" dim={dim} />
      <Tool name="down" label="Вниз" dim={dim} />
      <Tool name="sort" label="Сортировать" dim={dim} />
      <Tool name="filter" label="Отбор" />
      <Tool name="filterOff" label="Снять отбор" />
    </PaneTools>
  );
}

function Search() {
  return (
    <SearchBox>
      <SearchInput placeholder="Поиск (Ctrl+Alt+M)" aria-label="Поиск" />
      <ComboButton aria-label="Очистить"><Cross /></ComboButton>
    </SearchBox>
  );
}

export default function App() {
  return (
    <Shell>
      <GlobalStyle />
      <Gradients />
      <TitleBar>
        <Icon name="app" />
        <AppTitle>Конфигуратор - 1C:ERP Управление предприятием 2</AppTitle>
      </TitleBar>
      <MenuBar>
        <Grip />
        <MenuBarItem><u>Ф</u>айл</MenuBarItem>
        <MenuBarItem><u>П</u>равка</MenuBarItem>
        <MenuBarItem>Конфигурация</MenuBarItem>
        <MenuBarItem>Отладка</MenuBarItem>
        <MenuBarItem>Администрирование</MenuBarItem>
        <MenuBarItem><u>С</u>ервис</MenuBarItem>
        <MenuBarItem><u>О</u>кна</MenuBarItem>
        <MenuBarItem>Сп<u>р</u>авка</MenuBarItem>
      </MenuBar>
      <Toolbars>
        <ToolRow>
          <Grip />
          <Tool name="new" label="Новый" />
          <Tool name="open" label="Открыть" />
          <Tool name="save" label="Сохранить" dim />
          <Divider />
          <Tool name="cut" label="Вырезать" dim />
          <Tool name="copy" label="Копировать" dim />
          <Tool name="paste" label="Вставить" dim />
          <Divider />
          <Tool name="print" label="Печать" dim />
          <Tool name="preview" label="Просмотр" dim />
          <Divider />
          <Tool name="undo" label="Отменить" dim />
          <Tool name="redo" label="Вернуть" dim />
          <Divider />
          <Tool name="findFolder" label="Глобальный поиск" />
          <Tool name="zoom" label="Найти" />
          <Combo>
            <ComboInput aria-label="Строка поиска" />
            <ComboButton aria-label="Список"><Caret /></ComboButton>
            <ComboButton aria-label="Очистить"><Cross /></ComboButton>
          </Combo>
          <Tool name="findNext" label="Найти далее" dim />
          <Tool name="findPrev" label="Найти ранее" dim />
          <Divider />
          <Tool name="windows" label="Окна" />
          <Divider />
          <Tool name="scholar" label="Синтакс-помощник" />
          <Tool name="helpSearch" label="Поиск в справке" />
          <Tool name="book" label="Справка" />
          <Tool name="info" label="О программе" />
          <Caret $low />
        </ToolRow>
        <ToolRow>
          <Grip />
          <Tool name="treeForm" label="Открыть конфигурацию" dim />
          <Tool name="closeTree" label="Закрыть конфигурацию" />
          <Divider />
          <Tool name="database" label="Обновить базу данных" />
          <Tool name="configWindow" label="Окно конфигурации" />
          <Divider />
          <Tool name="play" label="Начать отладку" />
          <Caret $low />
        </ToolRow>
      </Toolbars>

      <Workspace>
        <Dock>
          <Pane>
            <PaneHeader>
              <PaneTitle>Конфигурация</PaneTitle>
              <Svg width="6" height="10" viewBox="0 0 6 10" aria-hidden="true">
                <path d="M1.5 1.5h3v4h-3zM3 5.5v3" fill="#fff" stroke="#eee" />
              </Svg>
              <button aria-label="Закрыть">
                <Svg width="11" height="11" viewBox="0 0 11 11" aria-hidden="true">
                  <path d="M1 1l9 9M10 1l-9 9" stroke="#505050" strokeWidth="2" />
                </Svg>
              </button>
            </PaneHeader>
            <PaneToolbar dim />
            <Search />
            <TreeArea>
              <TreeView nodes={configTree} />
              <ScrollBar>
                <ScrollButton aria-label="Прокрутить вверх"><UpTriangle /></ScrollButton>
                <ScrollThumb />
              </ScrollBar>
            </TreeArea>
            <PaneFoot />
          </Pane>
          <Pane>
            <PaneHeader $active>
              <PaneTitle>Расширение1 &lt;!&gt;</PaneTitle>
            </PaneHeader>
            <PaneToolbar />
            <Search />
            <TreeArea>
              <TreeView nodes={extensionTree} />
            </TreeArea>
          </Pane>
        </Dock>

        <Child>
          <ChildTitle>
            <Icon name="extension" />
            <PaneTitle>Расширения конфигурации</PaneTitle>
            <Minimize aria-label="Свернуть" />
          </ChildTitle>
          <ChildTools>
            <TextButton>Действия <SmallCaret /></TextButton>
            <Tool name="add" label="Добавить" />
            <Tool name="treeForm" label="Открыть" />
            <Tool name="remove" label="Удалить" />
            <Divider $wide />
            <TextButton>Конфигурация <SmallCaret /></TextButton>
            <Divider />
            <Tool name="refresh" label="Обновить" />
          </ChildTools>
          <TableArea>
            <Table>
              <colgroup>
                <Col $w={175} /><Col $w={91} /><Col $w={75} /><Col $w={75} /><Col $w={101} /><Col $w={75} /><Col />
              </colgroup>
              <thead>
                <tr>
                  <Th>Имя</Th>
                  <Th>Версия</Th>
                  <Th>Назначение</Th>
                  <Th>Активно</Th>
                  <Th>Безопасный ре...</Th>
                  <Th>Защита от ...</Th>
                  <Th>Используе...</Th>
                </tr>
              </thead>
              <tbody>
                <tr>
                  <Td $on>Расширение1</Td>
                  <Td />
                  <Td>Адаптация</Td>
                  <Td><Check type="checkbox" defaultChecked aria-label="Активно" /></Td>
                  <Td><Check type="checkbox" defaultChecked aria-label="Безопасный режим" /></Td>
                  <Td><Check type="checkbox" defaultChecked aria-label="Защита от опасных действий" /></Td>
                  <Td><Check type="checkbox" aria-label="Используется" /></Td>
                </tr>
              </tbody>
            </Table>
          </TableArea>
        </Child>
      </Workspace>

      <ContextMenu role="menu">
        {menuGroups.map((group, i) => (
          <MenuGroup key={i} role="group">
            {group.map((e) => (
              <MenuItem key={e.t} role="menuitem" disabled={e.off} $active={e.active}>
                <MenuIconSlot>{e.icon && <Icon name={e.icon} dim={e.off} />}</MenuIconSlot>
                <MenuText>{e.u ? <><u>{e.t[0]}</u>{e.t.slice(1)}</> : e.t}</MenuText>
                {e.key && <Shortcut>{e.key}</Shortcut>}
                {e.sub && <SubArrow />}
              </MenuItem>
            ))}
          </MenuGroup>
        ))}
      </ContextMenu>

      <Markup width="230" height="793" viewBox="0 0 230 793" fill="none" aria-hidden="true">
        <rect x="17" y="726.5" width="193.5" height="31" stroke={c.pink} strokeWidth="3" />
        <path d="M128 723L211 556" stroke={c.pink} strokeWidth="3" />
        <path d="M217 544L216 563 206 556z" fill={c.pink} />
      </Markup>
    </Shell>
  );
}
